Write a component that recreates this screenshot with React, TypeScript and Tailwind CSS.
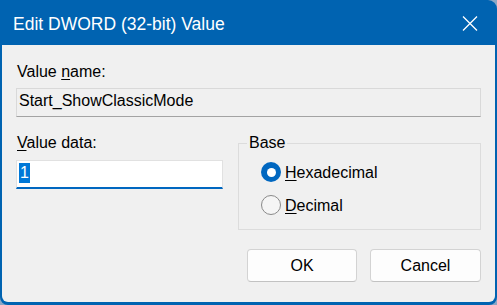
import React from "react";

function Radio({ checked, label, u }: { checked: boolean; label: string; u: string }) {
  return (
    <div className="flex items-start h-[20px] pl-[22px]">
      {checked ? (
        <div className="w-[20px] h-[20px] rounded-full bg-[#0067c0] flex items-center justify-center shrink-0">
          <div className="w-[9px] h-[9px] rounded-full bg-white" />
        </div>
      ) : (
        <div className="w-[20px] h-[20px] rounded-full border border-[#8a8a8a] bg-[#f5f5f5] shrink-0" />
      )}
      <span className="ml-[4px] mt-[1px] leading-[20px] text-[16px] text-black">
        <span className="underline underline-offset-[2px]">{u}</span>
        {label}
      </span>
    </div>
  );
}

export default function App() {
  return (
    <div className="w-[497px] h-[305px] bg-[#8aa7c6] font-['Liberation_Sans',Arial,sans-serif]">
      <div className="w-full h-full bg-[#0063b1] rounded-tr-[9px] rounded-b-[8px] flex flex-col">
        <div className="h-[45px] shrink-0 flex items-center justify-between pl-[13px] pr-[19px] text-white">
          <span className="text-[17.5px] leading-[20px] mt-[2px]">Edit DWORD (32-bit) Value</span>
          <svg width="16" height="15" viewBox="0 0 16 15" className="mt-[1px]">
            <path d="M1 0.5 L15 14.5 M15 0.5 L1 14.5" stroke="white" strokeWidth="1.3" fill="none" />
          </svg>
        </div>
        <div className="flex-1 mx-[2px] mb-[3px] bg-[#f0f0f0] rounded-b-[6px] px-[14px] pt-[17px] flex flex-col text-[16px] leading-[20px] text-black">
          <div className="h-[20px] pl-[1px]">
            Value <span className="underline underline-offset-[2px]">n</span>ame:
          </div>
          <div className="mt-[6px] h-[29px] border border-[#d9d9d9] border-b-[#a3a3a3] bg-[#f0f0f0] pl-[2px] pt-[2px]">
            Start_ShowClassicMode
          </div>
          <div className="mt-[16px] flex gap-[15px]">
            <div className="w-[207px] flex flex-col">
              <div className="h-[20px] pl-[1px]">
                <span className="underline underline-offset-[2px]">V</span>alue data:
              </div>
              <div className="mt-[7px] h-[29px] bg-white border border-[#e1e1e1] border-b-2 border-b-[#0067c0] pl-[2px] pt-[2px] flex items-start">
                <span className="bg-[#0078d7] text-white px-[1px] leading-[20px]">1</span>
              </div>
            </div>
            <fieldset className="flex-1 h-[97px] border border-[#dcdcdc] flex flex-col">
              <legend className="ml-[8px] px-[2px] leading-[20px]">Base</legend>
              <div className="mt-[9px]">
                <Radio checked u="H" label="exadecimal" />
              </div>
              <div className="mt-[13px]">
                <Radio checked={false} u="D" label="ecimal" />
              </div>
            </fieldset>
          </div>
          <div className="mt-[19px] flex justify-end gap-[13px]">
            <button className="w-[110px] h-[33px] bg-[#fdfdfd] border border-[#d3d3d3] border-b-[#c2c2c2] rounded-[4px] flex items-center justify-center text-[16px] text-black">
              OK
            </button>
            <button className="w-[111px] h-[33px] bg-[#fdfdfd] border border-[#d3d3d3] border-b-[#c2c2c2] rounded-[4px] flex items-center justify-center text-[16px] text-black">
              Cancel
            </button>
          </div>
        </div>
      </div>
    </div>
  );
}
